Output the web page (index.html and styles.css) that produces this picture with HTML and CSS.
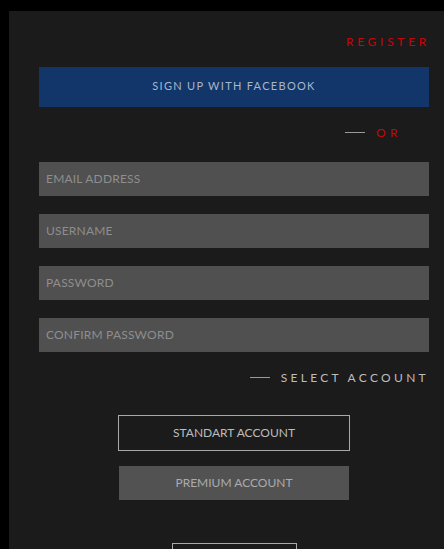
FILE: index.html
```html
<!DOCTYPE html>
<html>
<head>
<meta charset="utf-8">
<link rel="stylesheet" href="styles.css">
</head>
<body>
<div class="panel">
  <div class="register">REGISTER</div>
  <button class="fb">SIGN UP WITH FACEBOOK</button>
  <div class="divider or"><span class="line"></span><span class="label">OR</span></div>
  <div class="fields">
    <div class="field">EMAIL ADDRESS</div>
    <div class="field">USERNAME</div>
    <div class="field">PASSWORD</div>
    <div class="field">CONFIRM PASSWORD</div>
  </div>
  <div class="divider select"><span class="line"></span><span class="label">SELECT ACCOUNT</span></div>
  <div class="accounts">
    <div class="acc standard">STANDART ACCOUNT</div>
    <div class="acc premium">PREMIUM ACCOUNT</div>
    <div class="acc next"></div>
  </div>
</div>
</body>
</html>
```
FILE: styles.css
```css
html, body {
  margin: 0;
  padding: 0;
  background: #000;
  height: 549px;
  overflow: hidden;
}
body {
  padding: 11px 0 0 9px;
  font-family: Lato, "Liberation Sans", sans-serif;
}
.panel {
  background: #1b1b1b;
  width: 435px;
  height: 560px;
  box-sizing: border-box;
  padding: 23px 15px 0 30px;
  display: flex;
  flex-direction: column;
}
.register {
  align-self: flex-end;
  color: #c4060b;
  font-size: 12px;
  letter-spacing: 3.7px;
  margin-right: -1px;
  line-height: 15px;
}
.fb {
  margin-top: 18px;
  height: 40px;
  line-height: 38px;
  border: none;
  background: #12356a;
  color: #a9b6c9;
  font-family: inherit;
  font-size: 11px;
  letter-spacing: 1.3px;
  padding: 0 0 2px;
  width: 390px;
}
.divider {
  display: flex;
  align-items: center;
  justify-content: flex-end;
  gap: 11px;
}
.divider .line {
  width: 20px;
  height: 1px;
  background: #9a9a9a;
}
.or {
  margin-top: 18px;
  padding-right: 27px;
  height: 15px;
}
.or .label {
  color: #c4060b;
  font-size: 12px;
  letter-spacing: 4.5px;
}
.fields {
  margin-top: 22px;
  display: flex;
  flex-direction: column;
  gap: 18px;
}
.field {
  width: 390px;
  height: 34px;
  background: #505050;
  color: #8e8e8e;
  font-size: 12px;
  letter-spacing: 0.2px;
  line-height: 34px;
  padding-left: 7px;
  box-sizing: border-box;
}
.select {
  margin-top: 18px;
  height: 14px;
  margin-right: 0;
}
.select .label {
  color: #bdbdbd;
  font-size: 12px;
  letter-spacing: 3.3px;
}
.accounts {
  margin-top: 31px;
  display: flex;
  flex-direction: column;
  align-items: center;
}
.acc {
  box-sizing: border-box;
  text-align: center;
  font-size: 12px;
}
.standard {
  width: 232px;
  height: 36px;
  line-height: 34px;
  border: 1px solid #a9a9a9;
  color: #bcbcbc;
}
.premium {
  margin-top: 15px;
  width: 230px;
  height: 34px;
  line-height: 34px;
  background: #525252;
  color: #ababab;
}
.next {
  margin-top: 43px;
  width: 125px;
  height: 30px;
  border: 1px solid #a9a9a9;
  margin-left: 1px;
}
```
